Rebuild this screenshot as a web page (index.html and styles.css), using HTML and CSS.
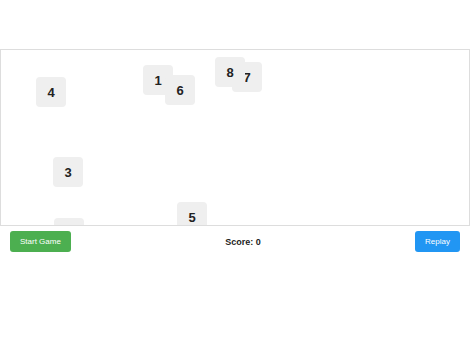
FILE: index.html
```html
<!DOCTYPE html>
<html>
<head>
<meta charset="utf-8">
<link rel="stylesheet" href="styles.css">
</head>
<body>
<div class="page">
  <div class="board">
    <div class="tile" style="left:142px;top:15px">1</div>
    <div class="tile" style="left:53px;top:168px">2</div>
    <div class="tile" style="left:52px;top:107px">3</div>
    <div class="tile" style="left:35px;top:27px">4</div>
    <div class="tile" style="left:176px;top:152px">5</div>
    <div class="tile" style="left:164px;top:25px">6</div>
    <div class="tile" style="left:231px;top:12px">7</div>
    <div class="tile" style="left:214px;top:7px">8</div>
  </div>
  <div class="controls">
    <button class="btn btn-start">Start Game</button>
    <span class="score">Score: 0</span>
    <button class="btn btn-replay">Replay</button>
  </div>
</div>
</body>
</html>
```

FILE: styles.css
```css
html, body {
  margin: 0;
  padding: 0;
  background: #fff;
  font-family: "Liberation Sans", Arial, sans-serif;
}
.page {
  padding-top: 49px;
  width: 470px;
}
.board {
  position: relative;
  box-sizing: border-box;
  width: 470px;
  height: 177px;
  border: 1px solid #dddddd;
  overflow: hidden;
}
.tile {
  position: absolute;
  width: 30px;
  height: 30px;
  border-radius: 4px;
  background: #efefef;
  color: #222;
  font-weight: bold;
  font-size: 13px;
  display: flex;
  align-items: center;
  justify-content: center;
}
.controls {
  display: flex;
  justify-content: space-between;
  align-items: center;
  padding: 5px 10px;
}
.btn {
  border: none;
  border-radius: 3px;
  color: #fff;
  font-family: "Liberation Sans", Arial, sans-serif;
  font-size: 8px;
  height: 21px;
  padding: 0 10px;
  margin: 0;
}
.btn-start { background: #4caf50; }
.btn-replay { background: #2196f3; }
.score {
  font-size: 9px;
  font-weight: bold;
  color: #222;
}
```
